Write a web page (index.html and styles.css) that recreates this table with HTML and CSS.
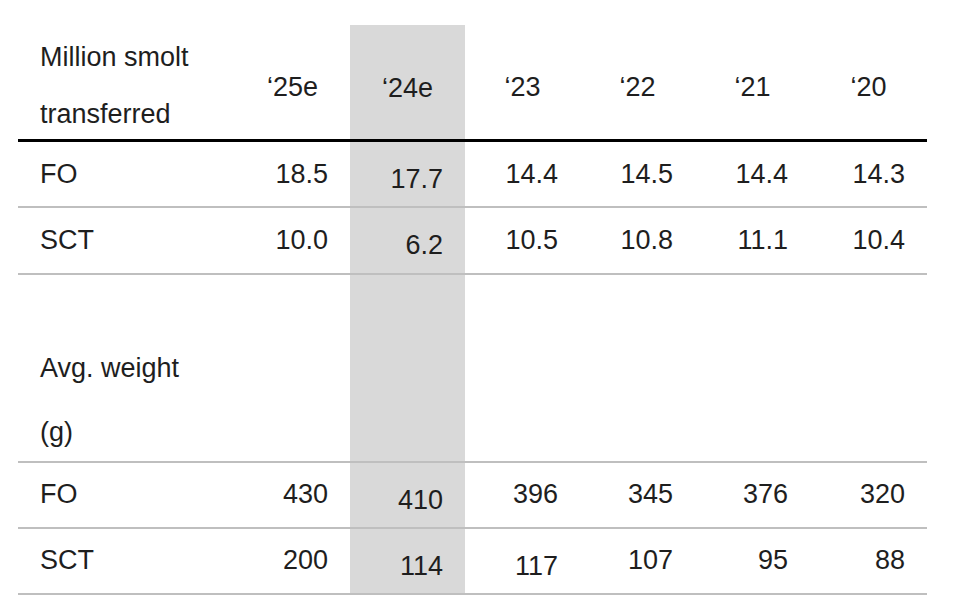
FILE: index.html
```html
<!DOCTYPE html>
<html>
<head>
<meta charset="utf-8">
<link rel="stylesheet" href="styles.css">
</head>
<body>
<table class="data">
  <colgroup>
    <col class="c-label"><col class="c-num"><col class="c-num"><col class="c-num"><col class="c-num"><col class="c-num"><col class="c-last">
  </colgroup>
  <tr class="head">
    <td class="label"><div class="ln">Million smolt</div><div class="ln second">transferred</div></td>
    <td class="yr">‘25e</td>
    <td class="yr hl shift-h">‘24e</td>
    <td class="yr">‘23</td>
    <td class="yr">‘22</td>
    <td class="yr">‘21</td>
    <td class="yr">‘20</td>
  </tr>
  <tr class="row r1">
    <td class="label">FO</td>
    <td class="num">18.5</td>
    <td class="num hl shift">17.7</td>
    <td class="num">14.4</td>
    <td class="num">14.5</td>
    <td class="num">14.4</td>
    <td class="num">14.3</td>
  </tr>
  <tr class="row r2">
    <td class="label">SCT</td>
    <td class="num">10.0</td>
    <td class="num hl shift">6.2</td>
    <td class="num">10.5</td>
    <td class="num">10.8</td>
    <td class="num">11.1</td>
    <td class="num">10.4</td>
  </tr>
  <tr class="sub">
    <td class="label"><div class="ln">Avg. weight</div><div class="ln second">(g)</div></td>
    <td></td>
    <td class="hl"></td>
    <td></td>
    <td></td>
    <td></td>
    <td></td>
  </tr>
  <tr class="row r3">
    <td class="label">FO</td>
    <td class="num">430</td>
    <td class="num hl shift">410</td>
    <td class="num">396</td>
    <td class="num">345</td>
    <td class="num">376</td>
    <td class="num">320</td>
  </tr>
  <tr class="row r3">
    <td class="label">SCT</td>
    <td class="num">200</td>
    <td class="num hl shift">114</td>
    <td class="num shift">117</td>
    <td class="num">107</td>
    <td class="num">95</td>
    <td class="num">88</td>
  </tr>
</table>
</body>
</html>
```
FILE: styles.css
```css
html, body {
  margin: 0;
  padding: 0;
  background: #ffffff;
}

body {
  padding: 25px 0 0 18px;
  font-family: "Liberation Sans", Arial, sans-serif;
  font-size: 27px;
  color: #1e1e1e;
}

.data {
  border-collapse: separate;
  border-spacing: 0;
  table-layout: fixed;
  width: 909px;
}

.c-label { width: 217px; }
.c-num { width: 115px; }
.c-last { width: 117px; }

.data td {
  padding: 0;
  vertical-align: top;
  line-height: 30px;
  white-space: nowrap;
}

.hl {
  background: #d9d9d9;
}

.label {
  padding-left: 22px !important;
  text-align: left;
}

.ln {
  line-height: 30px;
}

/* header row */
.head td {
  border-bottom: 3px solid #000000;
  height: 114px;
  box-sizing: content-box;
}
.head .label {
  padding-top: 16.6px;
  padding-bottom: 10.1px;
  height: auto;
}
.head .label .second {
  margin-top: 27.3px;
}
.head .yr {
  text-align: center;
  padding-top: 46.6px;
  height: auto;
}
.head .shift-h {
  padding-top: 48px;
}

/* data rows */
.row td {
  border-bottom: 2px solid #bfbfbf;
}
.num {
  text-align: right;
  padding-right: 22px !important;
}

.r1 td { padding-top: 17px; padding-bottom: 17px; }
.r1 td.shift { padding-top: 22.5px; padding-bottom: 11.5px; }

.r2 td { padding-top: 17px; padding-bottom: 18px; }
.r2 td.shift { padding-top: 22.5px; padding-bottom: 12.5px; }

.r3 td { padding-top: 16px; padding-bottom: 18px; }
.r3 td.shift { padding-top: 21.7px; padding-bottom: 12.3px; }

/* sub header row */
.sub td {
  border-bottom: 2px solid #bfbfbf;
}
.sub .label {
  padding-top: 77.6px;
  padding-bottom: 14.4px;
}
.sub .label .second {
  margin-top: 34px;
}
```
